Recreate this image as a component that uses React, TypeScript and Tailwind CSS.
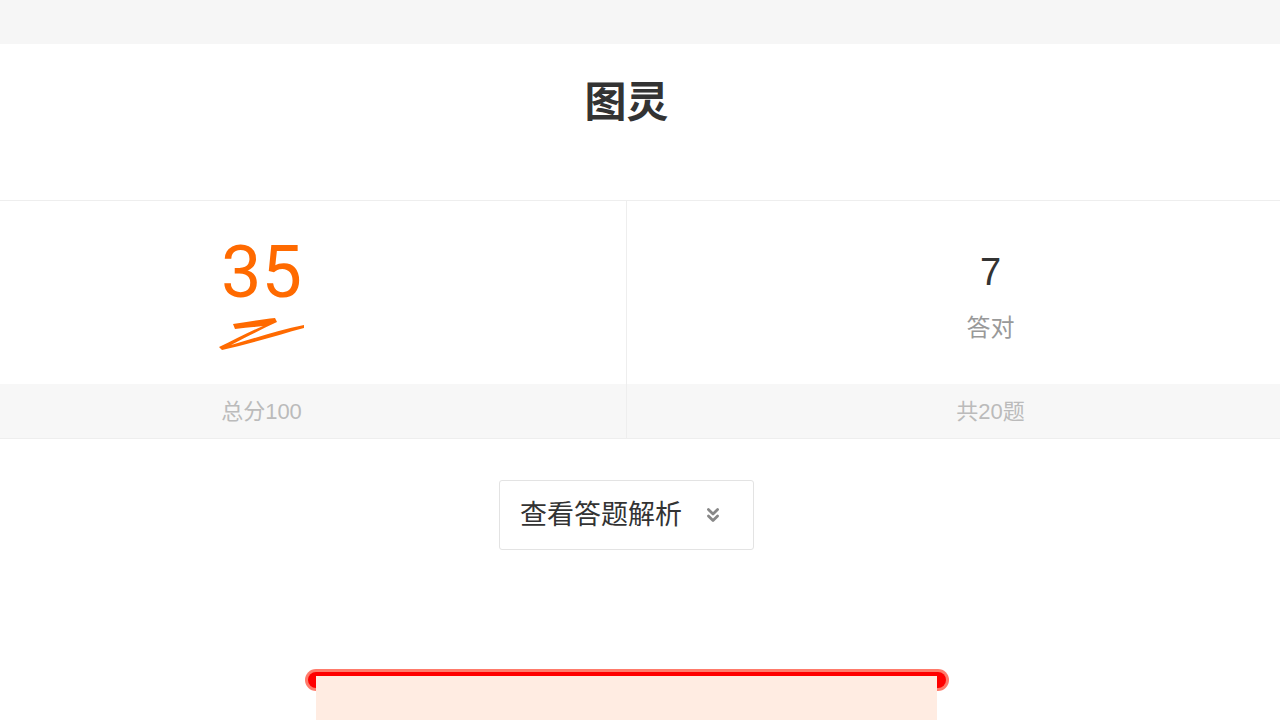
import React from "react";
import { ChevronsDown } from "lucide-react";

const sans = { fontFamily: '"Liberation Sans", "Noto Sans CJK SC", sans-serif' };

function Swoosh() {
  return (
    <svg width="88" height="34" viewBox="0 0 88 34" className="mt-[8px]">
      <path
        d="M15 7 C30 5 44 2 57 1 L59 5 C42 13 26 21 13 28 C37 21 61 13 86 8 L86 11 C60 18 32 27 4 33 L1 30 C16 23 31 15 45 9 C36 10 26 11 17 12 Z"
        fill="#ff6a00"
      />
    </svg>
  );
}

export default function App() {
  return (
    <div className="min-h-screen bg-white overflow-hidden" style={sans}>
      {/* top strip */}
      <div className="h-[44px] bg-[#f6f6f6]" />

      {/* title */}
      <div className="h-[156px] pt-[38px] pr-[27px] text-center">
        <h1 className="text-[42px] leading-none font-bold text-[#333]">图灵</h1>
      </div>

      {/* score stats */}
      <div className="grid grid-cols-[627px_1fr] border-t border-b border-[#eeeeee]">
        <div className="border-r border-[#eeeeee]">
          <div className="h-[183px] flex flex-col items-center pt-[36px] pr-[103px]">
            <div
              className="text-[72px] leading-none font-normal text-[#ff6a00]"
              style={{ fontFamily: 'Roboto, "Liberation Sans", sans-serif' }}
            >
              35
            </div>
            <Swoosh />
          </div>
          <div className="h-[54px] bg-[#f7f7f7] flex items-center justify-center pr-[103px] text-[22px] text-[#bbbbbb]">
            总分100
          </div>
        </div>
        <div>
          <div className="h-[183px] flex flex-col items-center pt-[52px] pl-[74px]">
            <div className="text-[38px] leading-none text-[#333]">7</div>
            <div className="mt-[25px] text-[24px] leading-none text-[#999]">答对</div>
          </div>
          <div className="h-[54px] bg-[#f7f7f7] flex items-center justify-center pl-[74px] text-[22px] text-[#bbbbbb]">
            共20题
          </div>
        </div>
      </div>

      {/* analysis button */}
      <div className="flex justify-center pr-[27px] mt-[41px]">
        <button className="w-[255px] h-[70px] border border-[#e3e3e3] rounded-[3px] flex items-center pl-[20px] gap-[20px]">
          <span className="text-[27px] leading-none text-[#333]">查看答题解析</span>
          <ChevronsDown size={22} strokeWidth={3} className="text-[#888]" />
        </button>
      </div>

      {/* receipt slot */}
      <div className="flex flex-col items-center pr-[27px] mt-[119px]">
        <div className="relative w-[644px] h-[22px] rounded-full bg-[#ff7b6b] p-[3px]">
          <div className="h-full rounded-full bg-[#ff0000]" />
        </div>
        <div className="relative w-[621px] h-[60px] -mt-[15px] bg-[#ffece2]" />
      </div>
    </div>
  );
}
